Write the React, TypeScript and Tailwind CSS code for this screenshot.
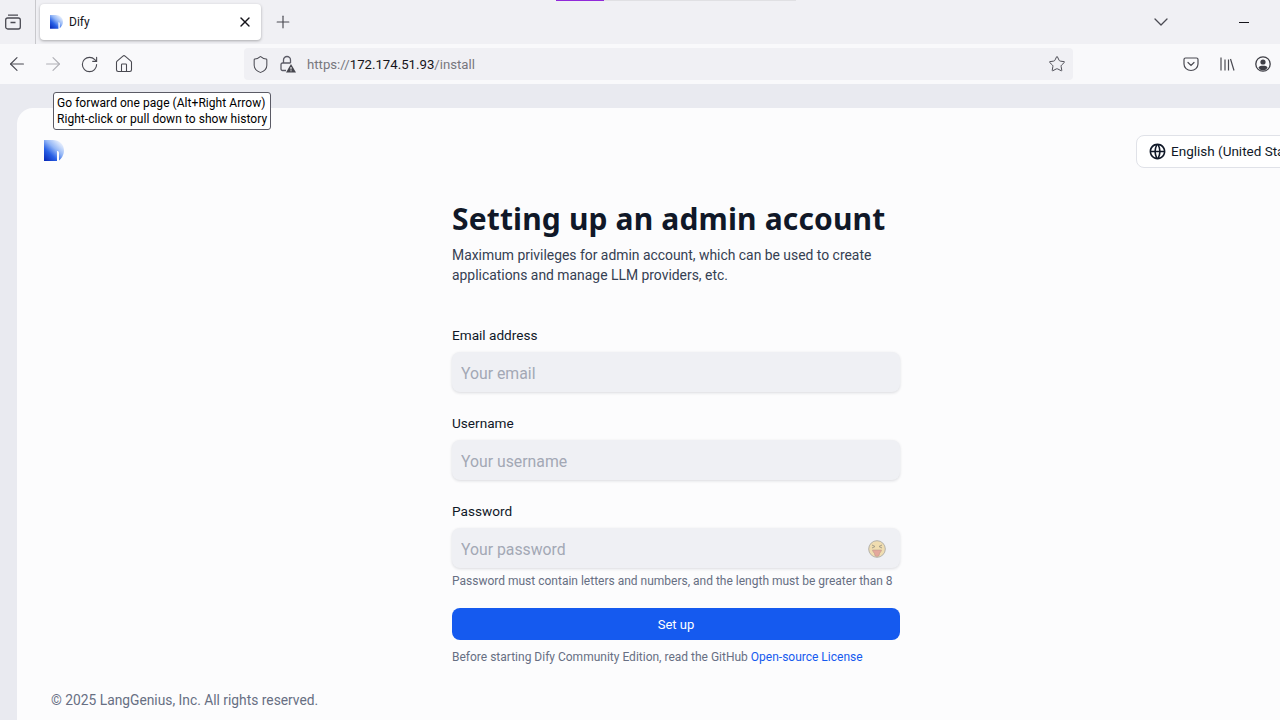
import { ArrowLeft, ArrowRight, ChevronDown, Home, Plus, RotateCw, Shield, Star, X } from "lucide-react";
import { RiGlobalLine } from "react-icons/ri";

function DifyLogo({ size }: { size: number }) {
  const id = `dify-${size}`;
  return (
    <svg width={size} height={size * 1.05} viewBox="0 0 20 21">
      <defs>
        <linearGradient id={id} x1="0.1" y1="1" x2="0.85" y2="0.15">
          <stop offset="0" stopColor="#0a2cbb" />
          <stop offset="0.35" stopColor="#2a62e6" />
          <stop offset="0.65" stopColor="#93b6f6" />
          <stop offset="1" stopColor="#e6eefd" />
        </linearGradient>
      </defs>
      <path d="M0 0H9C15.500 0 20 4.500 20 10.500C20 15 17.500 18.500 15 20.500V13C15 11.500 14 11 13 11V21H0Z" fill={`url(#${id})`} />
    </svg>
  );
}

function TabsIcon() {
  return (
    <svg width="16" height="16" viewBox="0 0 16 16" fill="none" stroke="#4a4a52" strokeWidth="1.3">
      <rect x="0.7" y="4" width="14.600" height="11" rx="2" />
      <path d="M3 1.200h10M5.500 8.500h5" />
    </svg>
  );
}

function LockWarning() {
  return (
    <svg width="16" height="18" viewBox="0 0 16 18" fill="none">
      <path d="M3.500 8V5a3.500 3.500 0 0 1 7 0v3" stroke="#5b5b66" strokeWidth="1.3" />
      <path d="M6 15.500H2.500a1.500 1.500 0 0 1-1.500-1.500V9.500A1.500 1.500 0 0 1 2.500 8h8" stroke="#5b5b66" strokeWidth="1.3" />
      <path d="M11 9L16 17.500H6Z" fill="#45454d" />
      <path d="M11 12v2.500M11 15.300v1" stroke="#fff" strokeWidth="1" />
    </svg>
  );
}

function PocketIcon() {
  return (
    <svg width="16" height="16" viewBox="0 0 16 16" fill="none" stroke="#4a4a52" strokeWidth="1.2">
      <path d="M2.500 2h11A1.500 1.500 0 0 1 15 3.500V8a7 6.500 0 0 1-14 0V3.500A1.500 1.500 0 0 1 2.500 2Z" />
      <path d="M5 6.500L8 9.500L11 6.500" strokeLinecap="round" />
    </svg>
  );
}

function LibraryIcon() {
  return (
    <svg width="16" height="16" viewBox="0 0 16 16" fill="none" stroke="#4a4a52" strokeWidth="1.200">
      <path d="M2 1.500v13M6 3.500v11M9.500 3.500v11M11.500 3l3.500 11.500" />
    </svg>
  );
}

function AccountIcon() {
  return (
    <svg width="16" height="16" viewBox="0 0 16 16">
      <circle cx="8" cy="8" r="7.200" fill="none" stroke="#3f3f46" strokeWidth="1.300" />
      <circle cx="8" cy="6" r="2.600" fill="#3f3f46" />
      <path d="M3.500 11.500C4.500 10 6 9.800 8 9.800s3.500.2 4.500 1.700C11.500 13.500 10 14.300 8 14.300s-3.500-.8-4.500-2.800Z" fill="#3f3f46" />
    </svg>
  );
}

function TongueEmoji() {
  return (
    <svg width="18" height="18" viewBox="0 0 18 18">
      <circle cx="9" cy="9" r="8.300" fill="#f0ddb0" stroke="#b4b2aa" strokeWidth="1" />
      <path d="M4 5l3 1.500-3 1.500M14 5l-3 1.500 3 1.500" fill="none" stroke="#9c9684" strokeWidth="0.900" />
      <path d="M4.500 10h9C13 12 12 13 11.500 13.300V14a2.500 2.500 0 0 1-5 0v-.7C6 13 5 12 4.500 10Z" fill="#e4a89c" stroke="#b59488" strokeWidth="0.500" />
    </svg>
  );
}

function Field({ label, placeholder, type = "text", children }: { label: string; placeholder: string; type?: string; children?: React.ReactNode }) {
  return (
    <div>
      <label className="block h-[20px] text-[13.6px] leading-[20px] text-[#101828]">{label}</label>
      <div className="relative mt-[7px]">
        <input
          type={type}
          placeholder={placeholder}
          className="h-10 w-full rounded-lg bg-[#eff0f4] px-[9px] pt-[2px] text-[15.800px] text-gray-900 shadow-[0_1px_3px_rgba(16,24,40,0.14)] outline-none placeholder:text-[#a3a8b5]"
        />
        {children}
      </div>
    </div>
  );
}

export default function App() {
  return (
    <div className="relative flex h-screen w-full flex-col overflow-hidden bg-[#e9eaf0] font-['Roboto',sans-serif]">
      {/* browser tab strip */}
      <div className="relative flex h-11 shrink-0 items-center bg-[#f0f0f4]">
        <div className="flex h-full w-[36px] items-center border-r border-[#c8c8cc] pl-[5px]">
          <TabsIcon />
        </div>
        <div className="ml-[4px] flex h-[36px] w-[221px] items-center rounded-[4px] bg-white px-[10px] shadow-[0_1px_3px_rgba(0,0,0,0.3)]">
          <DifyLogo size={13} />
          <span className="ml-[6px] text-[12px] text-[#15141a]">Dify</span>
          <X className="mr-[-2px] ml-auto text-[#15141a]" size={16} strokeWidth={2} />
        </div>
        <Plus className="ml-[12px] text-[#4a4a52]" size={20} strokeWidth={1.400} />
        <ChevronDown className="mr-[66px] ml-auto text-[#4a4a52]" size={24} strokeWidth={1.300} />
        <div className="mr-[31px] h-px w-[10px] bg-[#15141a]" />
        <div className="absolute top-0 left-[556px] h-px w-[48px] bg-[#9129d9]" />
        <div className="absolute top-0 left-[604px] h-px w-[192px] bg-[#e0e0e3]" />
      </div>

      {/* browser toolbar */}
      <div className="flex h-10 shrink-0 items-center bg-[#f9f9fb]">
        <div className="-ml-px flex w-9 justify-center">
          <ArrowLeft className="text-[#4a4a52]" size={22} strokeWidth={1.250} />
        </div>
        <div className="flex w-9 justify-center">
          <ArrowRight className="text-[#b0b0b6]" size={22} strokeWidth={1.250} />
        </div>
        <div className="flex w-9 justify-center">
          <RotateCw className="text-[#4a4a52]" size={19} strokeWidth={1.400} />
        </div>
        <div className="-ml-px flex w-9 justify-center">
          <Home className="text-[#4a4a52]" size={20} strokeWidth={1.300} />
        </div>
        <div className="ml-[102px] flex h-8 w-[829px] items-center rounded-[4px] bg-[#f0f0f4] px-[7px]">
          <Shield className="text-[#4a4a52]" size={19} strokeWidth={1.300} />
          <div className="ml-[10px]">
            <LockWarning />
          </div>
          <div className="ml-[11px] pt-[1px] text-[13.200px] leading-[20px] text-[#77777d]">
            https://<span className="text-[#15141a]">172.174.51.93</span>/install
          </div>
          <Star className="ml-auto text-[#4a4a52]" size={18} strokeWidth={1.300} />
        </div>
        <div className="ml-[110px]">
          <PocketIcon />
        </div>
        <div className="ml-[20px]">
          <LibraryIcon />
        </div>
        <div className="ml-[20px]">
          <AccountIcon />
        </div>
      </div>

      {/* gap above page */}
      <div className="h-6 shrink-0 bg-[#e9eaf0]" />

      {/* page, wider than the cropped window */}
      <div className="ml-[17px] flex min-h-0 w-[1318px] flex-1 flex-col rounded-tl-2xl bg-[#fcfcfd]">
        <div className="flex items-start pt-[27px] pl-[27px]">
          <div className="mt-[5px]">
            <DifyLogo size={20} />
          </div>
          <div className="ml-[1072px] flex h-[33px] w-[176px] shrink-0 items-center rounded-lg border border-[#e0e2e8] bg-white pl-[11px] text-[13.500px] whitespace-nowrap text-[#101828]">
            <RiGlobalLine className="mr-[4px] shrink-0 text-[#101828]" size={19} />
            English (United States)
          </div>
        </div>

        <div className="mx-auto mt-[33px] w-[448px]">
          <h1 className="font-['Noto_Sans',sans-serif] text-[30px] leading-[36px] font-bold tracking-[0.15px] text-[#101828]">
            Setting up an admin account
          </h1>
          <p className="mt-[8px] text-[13.900px] leading-[20px] text-[#354052]">
            Maximum privileges for admin account, which can be used to create applications and manage LLM providers, etc.
          </p>

          <div className="mt-[40px] flex flex-col gap-[21px]">
            <Field label="Email address" placeholder="Your email" type="email" />
            <Field label="Username" placeholder="Your username" />
            <Field label="Password" placeholder="Your password" type="password">
              <div className="absolute top-[12px] right-[14px]">
                <TongueEmoji />
              </div>
            </Field>
          </div>

          <div className="mt-[5px] text-[12px] leading-[16px] whitespace-nowrap text-[#676f83]">
            Password must contain letters and numbers, and the length must be greater than 8
          </div>

          <button className="mt-[19px] h-8 w-full rounded-lg bg-[#155aef] pt-[1px] text-[13px] text-white">Set up</button>

          <div className="mt-[9px] text-[12px] leading-[16px] whitespace-nowrap text-[#676f83]">
            Before starting Dify Community Edition, read the GitHub <a className="text-[#155aef]">Open-source License</a>
          </div>
        </div>

        <div className="mt-auto pb-[10px] pl-[34px] text-[13.800px] leading-[20px] text-[#676f83]">© 2025 LangGenius, Inc. All rights reserved.</div>
      </div>

      {/* tooltip */}
      <div className="absolute top-[92px] left-[53px] rounded-[3px] border border-[#5b5b66] bg-white px-[3px] py-[2px] text-[12px] leading-[16px] tracking-[0.05px] whitespace-nowrap text-black">
        Go forward one page (Alt+Right Arrow)
        <br />
        Right-click or pull down to show history
      </div>
    </div>
  );
}
